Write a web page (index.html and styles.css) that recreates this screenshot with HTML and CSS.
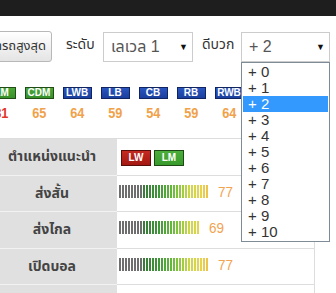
FILE: index.html
```html
<!DOCTYPE html>
<html>
<head>
<meta charset="utf-8">
<link rel="stylesheet" href="styles.css">
</head>
<body>
<div class="topbar"></div>
<div class="controls">
  <div class="btnwrap"><div class="btn">ความสามารถสูงสุด</div></div>
  <span class="label lbl1">ระดับ</span>
  <div class="select sel1"><span>เลเวล 1</span><span class="arrow">▼</span></div>
  <span class="label lbl2">ดีบวก</span>
  <div class="select sel2"><span>+ 2</span><span class="arrow">▼</span>
    <ul class="dropdown">
      <li>+ 0</li><li>+ 1</li><li class="active">+ 2</li><li>+ 3</li><li>+ 4</li><li>+ 5</li><li>+ 6</li><li>+ 7</li><li>+ 8</li><li>+ 9</li><li>+ 10</li>
    </ul>
  </div>
</div>
<div class="positions">
  <div class="pos"><span class="badge green">AM</span><span class="num red">81</span></div>
  <div class="pos"><span class="badge green">CDM</span><span class="num">65</span></div>
  <div class="pos"><span class="badge blue">LWB</span><span class="num">64</span></div>
  <div class="pos"><span class="badge blue">LB</span><span class="num">59</span></div>
  <div class="pos"><span class="badge blue">CB</span><span class="num">54</span></div>
  <div class="pos"><span class="badge blue">RB</span><span class="num">59</span></div>
  <div class="pos"><span class="badge blue">RWB</span><span class="num">64</span></div>
</div>
<div class="table">
  <div class="row">
    <div class="th">ตำแหน่งแนะนำ</div>
    <div class="td"><span class="tag red-tag">LW</span><span class="tag green-tag">LM</span></div>
  </div>
  <div class="row">
    <div class="th">ส่งสั้น</div>
    <div class="td"><div class="bars" data-value="77"></div><span class="val">77</span></div>
  </div>
  <div class="row">
    <div class="th">ส่งไกล</div>
    <div class="td"><div class="bars" data-value="69"></div><span class="val">69</span></div>
  </div>
  <div class="row">
    <div class="th">เปิดบอล</div>
    <div class="td"><div class="bars" data-value="77"></div><span class="val">77</span></div>
  </div>
  <div class="row">
    <div class="th">ยิงไกล</div>
    <div class="td"><div class="bars" data-value="86"></div><span class="val">86</span></div>
  </div>
</div>
<script src="script.js"></script>
</body>
</html>
```
FILE: styles.css
```css
* { box-sizing: border-box; }
html, body { margin: 0; padding: 0; overflow: hidden; }
body {
  width: 336px;
  height: 293px;
  background: #fff;
  font-family: Tahoma, "Noto Sans Thai", "Liberation Sans", Arial, sans-serif;
  color: #333;
}
.topbar { height: 16px; background: #1e1e1e; }
.controls {
  display: flex;
  align-items: center;
  margin-top: 15px;
  height: 31px;
}
.btnwrap {
  width: 52px;
  height: 31px;
  display: flex;
  justify-content: flex-end;
  overflow: hidden;
  flex-shrink: 0;
}
.btn {
  flex-shrink: 0;
  height: 31px;
  padding: 0 5px 0 8px;
  border: 1px solid #b8b8b8;
  border-radius: 3px;
  background: linear-gradient(#ffffff, #e4e4e4);
  font-size: 13px;
  line-height: 29px;
  color: #333;
  white-space: nowrap;
}
.label { font-size: 14px; color: #333; margin-top: -5px; white-space: nowrap; flex-shrink: 0; }
.lbl1 { margin-left: 14px; width: 28px; }
.lbl2 { margin-left: 9px; width: 29px; }
.select {
  position: relative;
  flex-shrink: 0;
  height: 30px;
  margin-top: 1px;
  border: 1px solid #cccccc;
  display: flex;
  align-items: center;
  justify-content: space-between;
  padding: 0 4px 0 7px;
  font-family: "Liberation Sans", Tahoma, "Noto Sans Thai", sans-serif;
  font-size: 16px;
  color: #555;
  background: #fff;
}
.sel1 { width: 90px; margin-left: 9px; }
.sel2 { width: 89px; margin-left: 10px; }
.arrow { font-size: 9px; color: #111; }
.dropdown {
  position: absolute;
  left: -1px;
  top: 29px;
  width: 89px;
  margin: 0;
  padding: 1px 0;
  list-style: none;
  border: 1px solid #7f8c98;
  background: #fff;
  z-index: 5;
}
.dropdown li {
  height: 16px;
  line-height: 16px;
  padding-left: 6px;
  font-size: 15px;
  color: #333;
}
.dropdown li.active { background: #3399ff; color: #fff; margin: 0 1px; padding-left: 5px; }
.positions {
  display: flex;
  margin-left: -18px;
  margin-top: 25px;
}
.pos {
  width: 38px;
  flex-shrink: 0;
  display: flex;
  flex-direction: column;
  align-items: center;
}
.badge {
  width: 29px;
  height: 12px;
  font-family: "Liberation Sans", Arial, sans-serif;
  font-size: 10px;
  font-weight: bold;
  line-height: 10px;
  text-align: center;
  color: #fff;
  border: 1px solid;
}
.badge.green { background: linear-gradient(#4aa83a, #37902a); border-color: #1f4d15; }
.badge.blue { background: linear-gradient(#2a56c0, #1a3f9e); border-color: #0f2460; }
.num {
  margin-top: 7px;
  font-family: "Liberation Sans", Arial, sans-serif;
  font-size: 15px;
  line-height: 14px;
  color: #f0a24a;
  font-weight: bold;
  transform: scaleX(0.85);
}
.num.red { color: #e2362a; }
.table {
  margin-top: 18px;
  width: 315px;
  border-top: 1px solid #dddddd;
}
.row {
  display: flex;
  height: 36.5px;
}
.th {
  width: 117px;
  flex-shrink: 0;
  background: #e0e0e0;
  border-bottom: 1px solid #f2f2f2;
  padding-right: 13px;
  display: flex;
  align-items: center;
  justify-content: center;
  font-size: 14px;
  font-weight: bold;
  color: #444;
}
.td {
  flex: 1;
  border-bottom: 1px solid #dddddd;
  border-right: 1px solid #dddddd;
  display: flex;
  align-items: center;
  padding-left: 2px;
  padding-bottom: 4px;
}
.row:first-child .td { padding-left: 4px; padding-bottom: 0; padding-top: 3px; }
.tag {
  width: 30px;
  height: 16px;
  margin-right: 3px;
  font-family: "Liberation Sans", Arial, sans-serif;
  font-size: 10px;
  font-weight: bold;
  line-height: 14px;
  text-align: center;
  color: #fff;
  border: 1px solid #222;
}
.red-tag { background: linear-gradient(#c42a22, #a41812); border-color: #5a0e0a; }
.green-tag { background: linear-gradient(#4cae3c, #379a2a); border-color: #1d4a14; }
.bars { display: flex; height: 13px; }
.bar { width: 2px; height: 13px; margin-right: 1px; }
.bar:last-child { margin-right: 0; }
.val {
  margin-left: 10px;
  font-family: "Liberation Sans", Arial, sans-serif;
  font-size: 15px;
  color: #f2a350;
  transform: scaleX(0.9);
  transform-origin: left center;
}
```
FILE: script.js
```js
(function () {
  var stops = [
    [0, [110, 110, 110]],
    [7, [110, 110, 110]],
    [8, [58, 122, 58]],
    [13, [64, 150, 58]],
    [18, [110, 190, 60]],
    [23, [200, 214, 72]],
    [27, [232, 210, 78]],
    [31, [240, 180, 76]],
    [40, [232, 96, 48]]
  ];
  function colorAt(i) {
    for (var k = 0; k < stops.length - 1; k++) {
      var a = stops[k], b = stops[k + 1];
      if (i >= a[0] && i <= b[0]) {
        var t = b[0] === a[0] ? 0 : (i - a[0]) / (b[0] - a[0]);
        var c = a[1].map(function (v, j) { return Math.round(v + (b[1][j] - v) * t); });
        return 'rgb(' + c.join(',') + ')';
      }
    }
    return 'rgb(232,96,48)';
  }
  var lists = document.querySelectorAll('.bars');
  for (var n = 0; n < lists.length; n++) {
    var el = lists[n];
    var count = Math.floor(parseInt(el.getAttribute('data-value'), 10) / 2.5);
    for (var i = 0; i < count; i++) {
      var s = document.createElement('span');
      s.className = 'bar';
      s.style.background = colorAt(i);
      el.appendChild(s);
    }
  }
})();
```
